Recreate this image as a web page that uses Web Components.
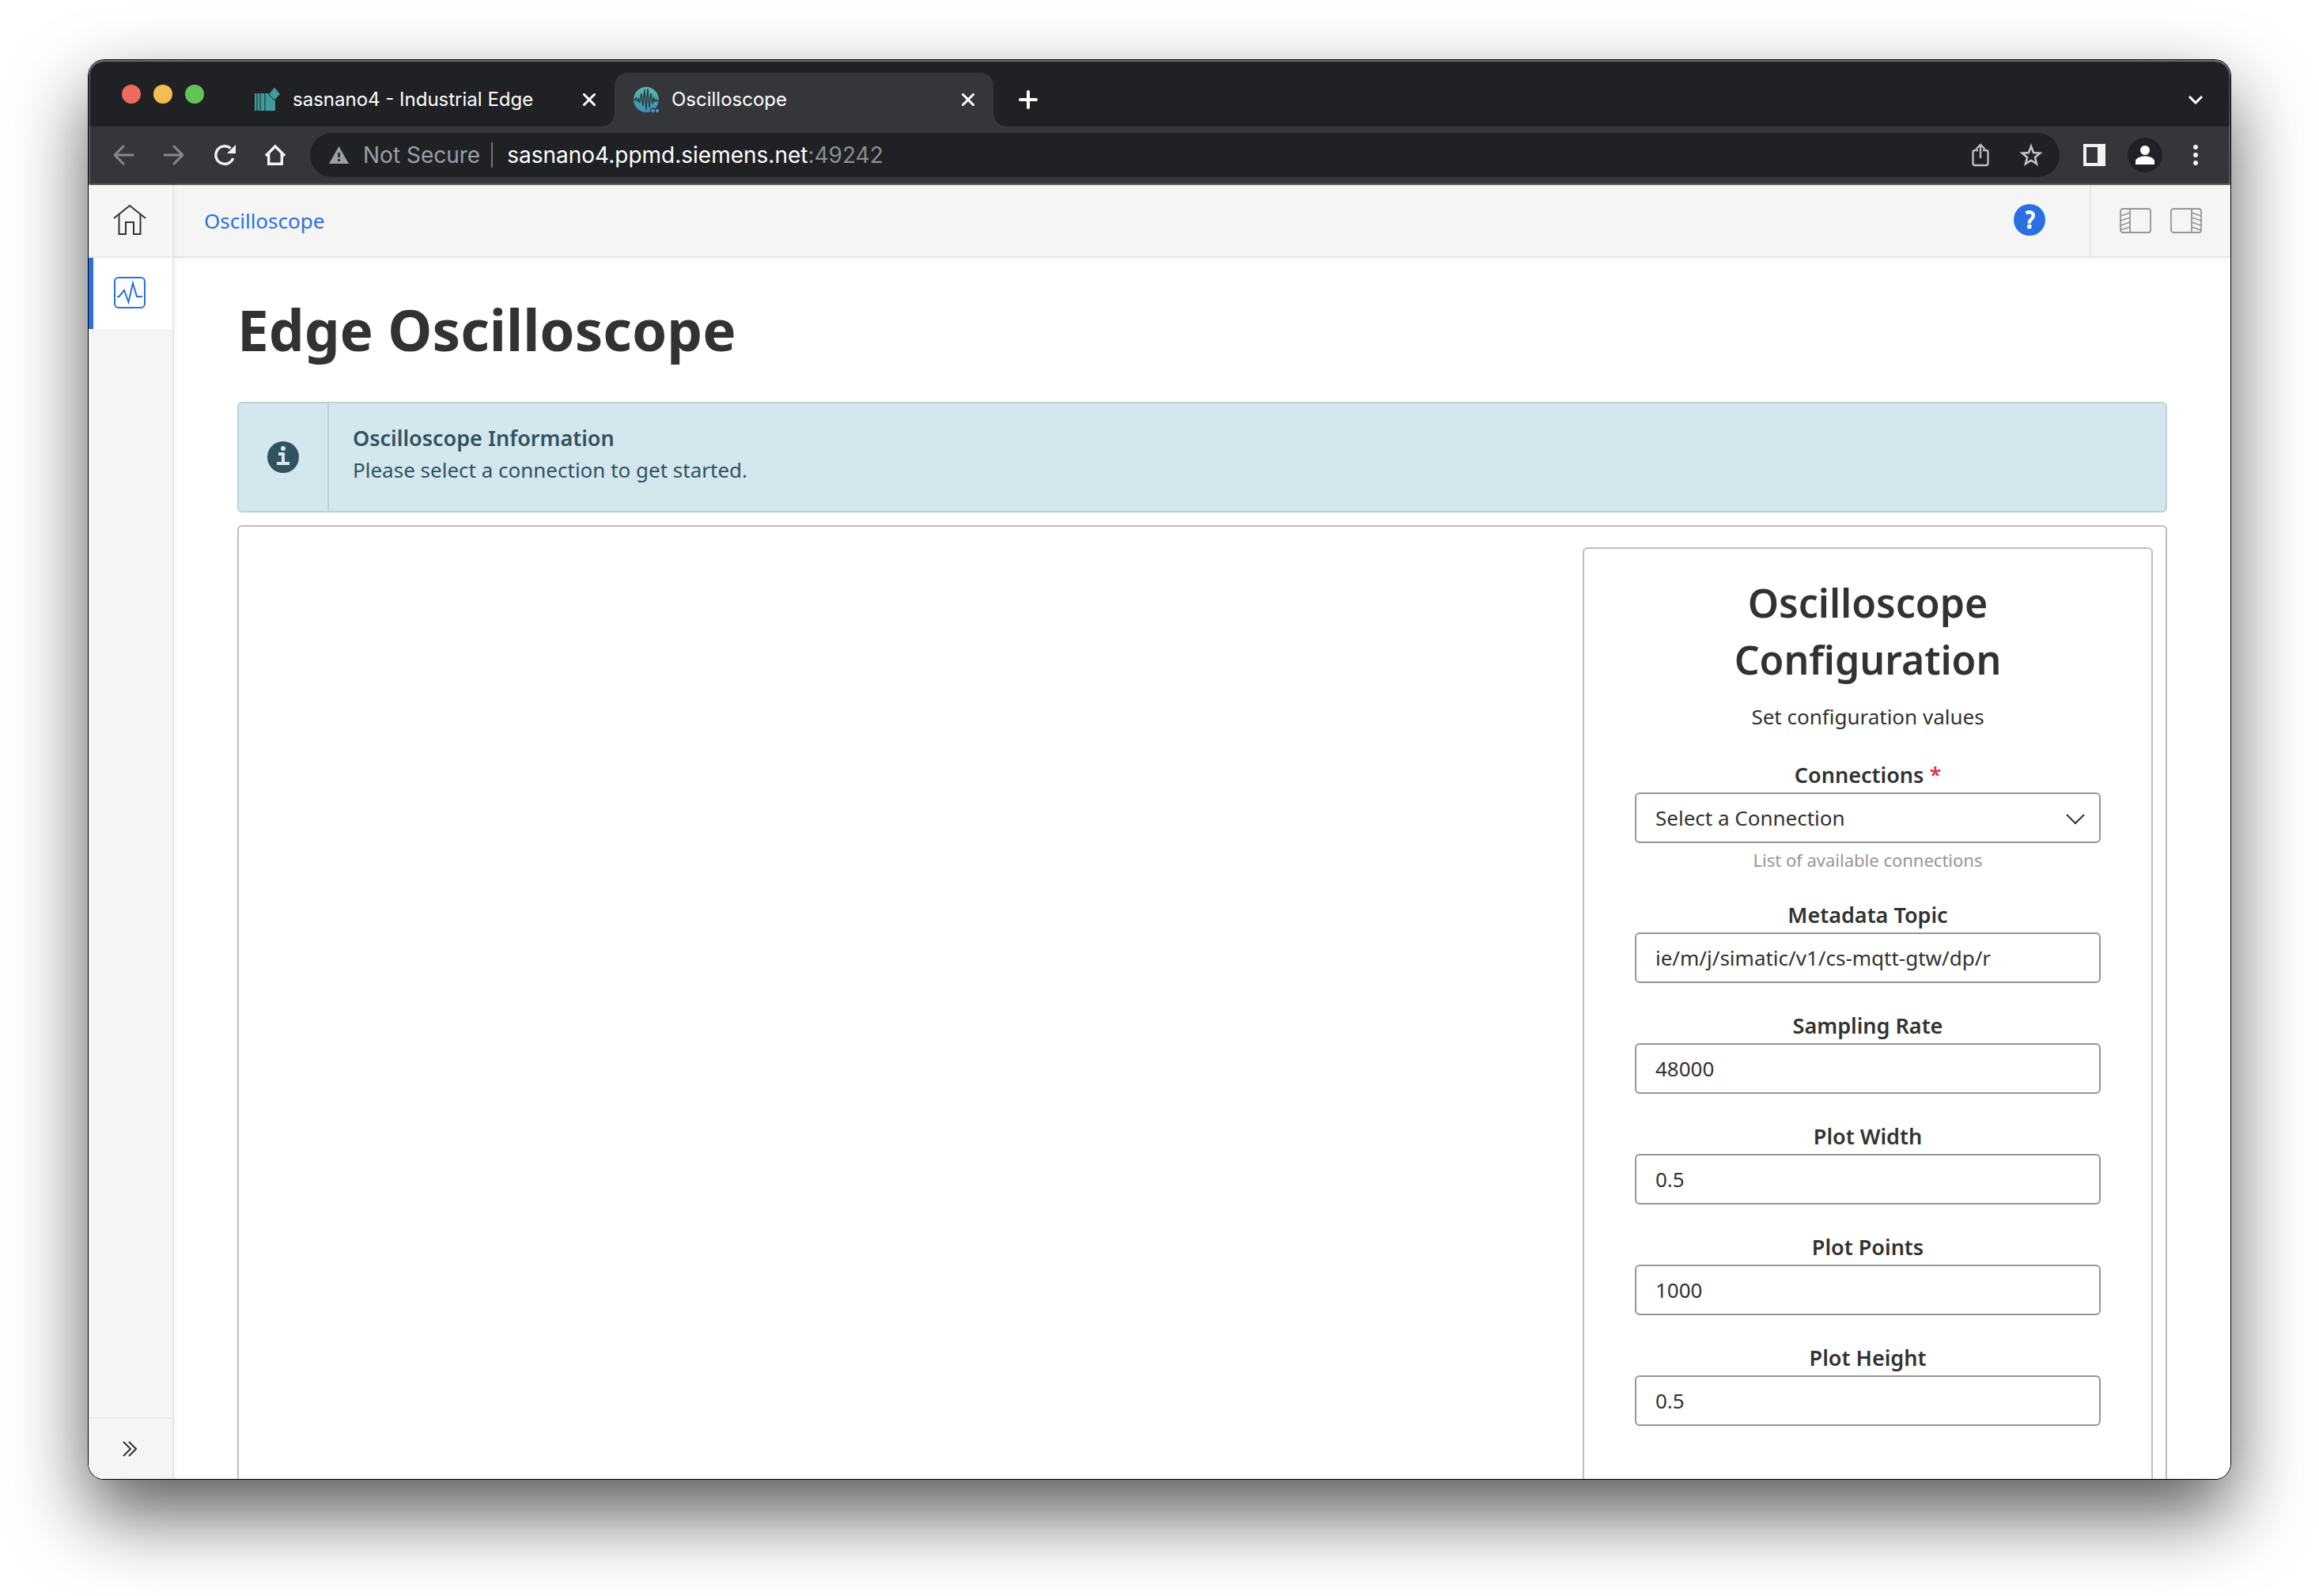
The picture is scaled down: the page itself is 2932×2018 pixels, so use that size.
<!DOCTYPE html>
<html lang="en">
<head>
<meta charset="utf-8">
<title>Oscilloscope</title>
<style>
  html, body { margin: 0; height: 100%; background: #fff; }
  body {
    box-sizing: border-box;
    padding: 76px 112px 148px;
    display: flex;
    flex-direction: column;
    overflow: hidden;
    font-family: "Noto Sans", "Open Sans", sans-serif;
    color: #323232;
  }
</style>
</head>
<body>
<browser-window>
  <tab-strip slot="tabs">
    <browser-tab label="sasnano4 - Industrial Edge">
      <svg slot="favicon" width="32" height="32" viewBox="0 0 32 32" fill="#439a9a"><path d="M0 8h17l9 9v13H0z"/><path d="M2 8h2v22H2zM6 8h2v22H6zM12 8h2v22h-2z" fill="#2b5f62"/><path d="M17.500 9L25 0l7.500 9-7.500 8z" stroke="#202124" stroke-width="1"/></svg>
    </browser-tab>
    <browser-tab label="Oscilloscope" active>
      <svg slot="favicon" width="32" height="32" viewBox="0 0 32 32"><defs><linearGradient id="g" x1="0" y1="0" x2="0" y2="1"><stop offset="0" stop-color="#62bcb8"/><stop offset=".5" stop-color="#459fa2"/><stop offset="1" stop-color="#3c8fc9"/></linearGradient></defs><circle cx="16" cy="16" r="16" fill="url(#g)"/><path d="M0 16h2l1.500-2 1.500 4 1.500-3 1.500 5 2-12 2 16 2-21 2 26 2-27 2 24 2-18 2 13 1.500-7 1.500 4 1.500-2 1.500 2h2" fill="none" stroke="#2b3b40" stroke-width="1.400"/><circle cx="24.500" cy="30" r="3.600" fill="#35363a"/><circle cx="30" cy="30" r="3.600" fill="#35363a"/><circle cx="24.500" cy="30" r="2.300" fill="#3f96cc"/><circle cx="30" cy="30" r="2.300" fill="#3f96cc"/></svg>
    </browser-tab>
  </tab-strip>
  <tool-bar slot="toolbar" host="sasnano4.ppmd.siemens.net" port=":49242"></tool-bar>
  <app-shell>
    <side-nav slot="nav"></side-nav>
    <app-header slot="header"><a href="#oscilloscope">Oscilloscope</a></app-header>
    <scope-page>
      <span slot="title">Edge Oscilloscope</span>
      <info-alert slot="alert">
        <span slot="title">Oscilloscope Information</span>
        Please select a connection to get started.
      </info-alert>
      <config-card>
        <span slot="title">Oscilloscope Configuration</span>
        <span slot="lead">Set configuration values</span>
        <select-field label="Connections" option="Select a Connection" hint="List of available connections"></select-field>
        <text-field label="Metadata Topic" value="ie/m/j/simatic/v1/cs-mqtt-gtw/dp/r"></text-field>
        <text-field label="Sampling Rate" value="48000"></text-field>
        <text-field label="Plot Width" value="0.5"></text-field>
        <text-field label="Plot Points" value="1000"></text-field>
        <text-field label="Plot Height" value="0.5"></text-field>
      </config-card>
    </scope-page>
  </app-shell>
</browser-window>

<script>
const RESET = `
  :host, *, *::before, *::after { box-sizing: border-box; }
  button { margin: 0; padding: 0; border: 0; background: none; color: inherit; font: inherit; display: flex; align-items: center; justify-content: center; }
  svg { display: block; flex: none; }
`;

const define = (name, render) => customElements.define(name, class extends HTMLElement {
  connectedCallback() {
    if (this.shadowRoot) return;
    const tpl = document.createElement('template');
    tpl.innerHTML = render(this);
    this.attachShadow({ mode: 'open' }).append(tpl.content.cloneNode(true));
  }
});

define('browser-window', () => `
  <style>${RESET}
    :host { position: relative; flex: 1; min-height: 0; display: flex; flex-direction: column; overflow: visible;
      border-radius: 20px; background: #fff;
      box-shadow: 0 0 0 1px #000, 0 44px 96px rgba(0,0,0,.65); }
    .clip { flex: 1; min-height: 0; display: flex; flex-direction: column; overflow: hidden; border-radius: 20px; }
    .edge { position: absolute; inset: 0; border-radius: 20px; pointer-events: none;
      box-shadow: inset 0 2px 0 rgba(255,255,255,.2), inset 0 0 0 2px rgba(255,255,255,.18); }
  </style>
  <div class="clip"><slot name="tabs"></slot><slot name="toolbar"></slot><slot></slot></div>
  <div class="edge"></div>
`);

define('tab-strip', () => `
  <style>${RESET}
    :host { display: flex; align-items: flex-end; height: 84px; flex: none; background: #202124; color: #fff;
      font-family: Inter, sans-serif; }
    .lights { display: flex; gap: 16px; height: 82px; align-items: center; padding: 0 40px 0 42px; }
    .lights button { width: 24px; height: 24px; border-radius: 50%; }
    .close { background: #ed6a5e; } .min { background: #f5bd4f; } .max { background: #61c454; }
    .new, .more { height: 68px; width: 64px; }
    .new { margin-left: 12px; }
    .more { margin-left: auto; margin-right: 12px; }
  </style>
  <div class="lights"><button class="close" aria-label="Close window"></button><button class="min" aria-label="Minimise"></button><button class="max" aria-label="Zoom"></button></div>
  <slot></slot>
  <button class="new" aria-label="New tab"><svg width="24" height="24" viewBox="0 0 24 24" fill="none" stroke="#fff" stroke-width="4" stroke-linecap="round"><path d="M12 2v20M2 12h20"/></svg></button>
  <button class="more" aria-label="Search tabs"><svg width="20" height="12" viewBox="0 0 20 12" fill="none" stroke="#fff" stroke-width="3"><path d="M2 2l8 8 8-8"/></svg></button>
`);

define('browser-tab', el => `
  <style>${RESET}
    :host { position: relative; display: flex; align-items: center; gap: 16px; width: 479px; height: 68px;
      padding: 0 24px; font-size: 24px; line-height: 32px; }
    :host([active]) { background: #35363a; border-radius: 16px 16px 0 0; }
    :host([active])::before, :host([active])::after { content: ""; position: absolute; bottom: 0; width: 16px; height: 16px; }
    :host([active])::before { right: 100%; background: radial-gradient(circle at 0 0, #202124 15px, #35363a 16px); }
    :host([active])::after { left: 100%; background: radial-gradient(circle at 100% 0, #202124 15px, #35363a 16px); }
    span { flex: 1; white-space: nowrap; }
  </style>
  <slot name="favicon"></slot>
  <span>${el.getAttribute('label')}</span>
  <button aria-label="Close tab"><svg width="16" height="16" viewBox="0 0 16 16" fill="none" stroke="#fff" stroke-width="3" stroke-linecap="round"><path d="M1.500 1.500l13 13M14.500 1.500l-13 13"/></svg></button>
`);

define('tool-bar', el => `
  <style>${RESET}
    :host { display: flex; align-items: center; gap: 12px; height: 74px; flex: none; padding: 0 12px;
      background: #35363a; border-bottom: 2px solid #5c5d61; font-family: Inter, sans-serif; font-size: 28px; line-height: 36px; }
    .group { display: flex; align-items: center; }
    button { width: 64px; height: 56px; }
    .omni { flex: 1; min-width: 0; height: 56px; border-radius: 28px; background: #202124; display: flex; align-items: center; padding: 0 4px 0 24px; }
    .secure { color: #9aa0a6; padding-left: 18px; white-space: nowrap; }
    .bar { width: 2px; height: 32px; background: #6f7276; margin: 0 18px 0 14px; }
    .url { color: #fff; white-space: nowrap; }
    .url i { font-style: normal; color: #8e8f92; }
    .omni .group { margin-left: auto; }
    .who { width: 44px; height: 44px; border-radius: 50%; background: #202124; display: flex; align-items: center; justify-content: center; }
  </style>
  <div class="group">
    <button aria-label="Back"><svg width="28" height="28" viewBox="0 0 28 28" fill="none" stroke="#87888b" stroke-width="3" stroke-linecap="round" stroke-linejoin="round"><path d="M26 14H3M14 3L3 14l11 11"/></svg></button>
    <button aria-label="Forward"><svg width="28" height="28" viewBox="0 0 28 28" fill="none" stroke="#87888b" stroke-width="3" stroke-linecap="round" stroke-linejoin="round"><path d="M2 14h23M14 3l11 11-11 11"/></svg></button>
    <button aria-label="Reload"><svg width="28" height="28" viewBox="0 0 28 28" fill="none" stroke="#f1f3f4" stroke-width="3.400"><path d="M24.700 18A11.300 11.300 0 1 1 21.500 5.500"/><path d="M28 1v11H17z" fill="#f1f3f4" stroke="none"/></svg></button>
    <button aria-label="Home"><svg width="28" height="28" viewBox="0 0 28 28" fill="none" stroke="#f1f3f4" stroke-width="3.400"><path d="M2 15L14 3l12 12"/><path d="M5.700 12v13.300h16.600V12"/></svg></button>
  </div>
  <div class="omni">
    <svg width="25" height="22" viewBox="0 0 25 22"><path d="M12.500 0L25 22H0z" fill="#9aa0a6"/><path d="M11.200 8h2.600v6h-2.600zM11.200 16h2.600v3h-2.600z" fill="#202124"/></svg>
    <span class="secure">Not Secure</span><span class="bar"></span>
    <span class="url">${el.getAttribute('host')}<i>${el.getAttribute('port')}</i></span>
    <div class="group">
      <button aria-label="Share"><svg width="22" height="30" viewBox="0 0 22 30" fill="none" stroke="#bdbdbf" stroke-width="2.400"><path d="M8 9H4a2.500 2.500 0 0 0-2.500 2.500V25.500A2.500 2.500 0 0 0 4 28h14a2.500 2.500 0 0 0 2.500-2.500V11.500A2.500 2.500 0 0 0 18 9h-4"/><path d="M11 19V2.500M5.500 7.500L11 2l5.500 5.500"/></svg></button>
      <button aria-label="Bookmark"><svg width="30" height="30" viewBox="0 0 30 30" fill="none" stroke="#c0c1c3" stroke-width="2.600"><path d="M15 4l3 8 8.300.600-6.400 5.400 2.100 8.200L15 21.700l-7 4.500 2.100-8.200-6.400-5.400L12 12z"/></svg></button>
    </div>
  </div>
  <div class="group">
    <button aria-label="Side panel"><svg width="28" height="28" viewBox="0 0 28 28"><path d="M0 0h28v28H0zM4 4v20h14V4z" fill="#f1f3f4" fill-rule="evenodd"/></svg></button>
    <button aria-label="Profile"><span class="who"><svg width="24" height="24" viewBox="0 0 24 24" fill="#fff"><circle cx="12" cy="6" r="6"/><path d="M0 24v-4c0-4 6-6.500 12-6.500S24 16 24 20v4z"/></svg></span></button>
    <button aria-label="Menu"><svg width="6" height="26" viewBox="0 0 6 26" fill="#f1f3f4"><circle cx="3" cy="3" r="3"/><circle cx="3" cy="13" r="3"/><circle cx="3" cy="23" r="3"/></svg></button>
  </div>
`);

define('app-shell', () => `
  <style>${RESET}
    :host { flex: 1; min-height: 0; display: flex; background: #fff; }
    main { flex: 1; min-width: 0; display: flex; flex-direction: column; overflow: hidden; }
  </style>
  <slot name="nav"></slot>
  <main><slot name="header"></slot><slot></slot></main>
`);

define('side-nav', () => `
  <style>${RESET}
    :host { position: relative; z-index: 1; display: flex; width: 108px; flex: none; background: #f5f5f5; border-right: 2px solid #e6e6e6;
      box-shadow: 0 0 8px rgba(0,0,0,.06); }
    nav { flex: 1; display: flex; flex-direction: column; }
    a { display: flex; align-items: center; justify-content: center; height: 92px; padding: 0 2px 2px 0; border-bottom: 2px solid #e9e9e9; }
    a.on { height: 90px; background: #fff; border: 0; border-left: 6px solid #2a70e0; padding-right: 8px; }
    button { margin-top: auto; height: 78px; border-top: 2px solid #ebebeb; width: 100%; padding-right: 2px; }
  </style>
  <nav>
    <a href="#home" aria-label="Home"><svg width="42" height="40" viewBox="0 0 42 40" fill="none" stroke="#323232" stroke-width="2"><path d="M1 18L21 2l20 16"/><path d="M7.500 13v25h8.500V23h10v15h8.500V13"/></svg></a>
    <a class="on" href="#oscilloscope" aria-label="Oscilloscope"><svg width="40" height="40" viewBox="0 0 40 40" fill="none" stroke="#2a70e0" stroke-width="2"><rect x="1" y="1" width="38" height="38" rx="5"/><path d="M4 25h2.500L13 17l5.500 15L24 8l5 17h7"/></svg></a>
    <button aria-label="Expand"><svg width="18" height="20" viewBox="0 0 18 20" fill="none" stroke="#323232" stroke-width="2"><path d="M1 1l9 9-9 9M8 1l9 9-9 9"/></svg></button>
  </nav>
`);

define('app-header', () => `
  <style>${RESET}
    :host { display: flex; align-items: center; height: 92px; flex: none; padding-left: 38px; background: #f5f5f5;
      border-bottom: 2px solid #e6e6e6; box-shadow: 0 0 8px rgba(0,0,0,.06); font-size: 26px; line-height: 40px; }
    ::slotted(a) { color: #2a70e0; text-decoration: none; }
    .help { margin-left: auto; margin-right: 56px; padding-bottom: 2px; }
    .panes { align-self: stretch; display: flex; align-items: center; gap: 24px; padding: 0 36px; border-left: 2px solid #e6e6e6; }
  </style>
  <slot></slot>
  <button class="help" aria-label="Help"><svg width="40" height="40" viewBox="0 0 40 40"><circle cx="20" cy="20" r="20" fill="#2a70e0"/><path d="M15.500 11.500c5-2.500 9.300-.8 9.300 3.200 0 4.300-5.300 4.500-5.100 9.800" fill="none" stroke="#fff" stroke-width="4.400"/><circle cx="19.800" cy="28.400" r="2.900" fill="#fff"/></svg></button>
  <div class="panes">
    <button aria-label="Left pane"><svg width="40" height="32" viewBox="0 0 40 32" fill="none" stroke="#969696" stroke-width="1.800"><rect x="1" y="1" width="38" height="30" rx="3"/><path d="M13 1v30M1 10l12-4M1 16l12-4M1 22l12-4M1 28l12-4"/></svg></button>
    <button aria-label="Right pane"><svg width="40" height="32" viewBox="0 0 40 32" fill="none" stroke="#969696" stroke-width="1.800"><rect x="1" y="1" width="38" height="30" rx="3"/><path d="M27 1v30M39 10L27 6M39 16l-12-4M39 22l-12-4M39 28l-12-4"/></svg></button>
  </div>
`);

define('scope-page', () => `
  <style>${RESET}
    :host { flex: 1; min-height: 0; display: flex; flex-direction: column; padding: 48px 80px 0; overflow: hidden; }
    h1 { margin: 0 0 48px; font-size: 71px; line-height: 86px; font-weight: 700; flex: none; }
    .panel { margin-top: 16px; flex: none; display: flex; justify-content: flex-end; padding: 26px 16px; border: 2px solid #bdbdbd; border-radius: 6px; }
  </style>
  <h1><slot name="title"></slot></h1>
  <slot name="alert"></slot>
  <section class="panel"><slot></slot></section>
`);

define('info-alert', () => `
  <style>${RESET}
    :host { display: flex; flex: none; min-height: 140px; border: 2px solid #bdd0d8; border-radius: 6px; background: #d5e7ee; color: #2f535f;
      font-size: 26px; line-height: 40px; }
    .icon { width: 114px; display: flex; align-items: center; justify-content: center; border-right: 2px solid #bdd0d8; }
    .body { padding: 24px 30px; }
    strong { display: block; font-size: 27px; font-weight: 600; }
  </style>
  <div class="icon"><svg width="40" height="40" viewBox="0 0 40 40"><circle cx="20" cy="20" r="20" fill="#2f535f"/><circle cx="20" cy="9" r="3" fill="#d5e7ee"/><path d="M14 14h8v12h6v4H12v-4h6v-8h-4z" fill="#d5e7ee"/></svg></div>
  <div class="body"><strong><slot name="title"></slot></strong><slot></slot></div>
`);

define('config-card', () => `
  <style>${RESET}
    :host { width: 721px; display: block; border: 2px solid #bdbdbd; border-radius: 6px; padding: 32px 64px 120px; text-align: center; }
    h2 { margin: 0 0 16px; font-size: 50px; line-height: 72px; font-weight: 600; }
    p { margin: 0 0 34px; font-size: 26px; line-height: 40px; }
    form { display: flex; flex-direction: column; gap: 34px; }
  </style>
  <h2><slot name="title"></slot></h2>
  <p><slot name="lead"></slot></p>
  <form><slot></slot></form>
`);

const FIELD = `${RESET}
  :host { display: block; font-size: 26px; line-height: 40px; }
  label { display: block; font-size: 27px; font-weight: 600; margin-bottom: 2px; }
  label b { color: #e0334c; font-weight: 600; }
  input, select { display: block; width: 100%; height: 64px; margin: 0; padding: 0 24px; border: 2px solid #969696; border-radius: 6px;
    background: #fff; color: #323232; font: inherit; appearance: none; }
  .box { display: grid; align-items: center; }
  .box > * { grid-area: 1 / 1; }
  .box svg { justify-self: end; margin: 4px 20px 0 0; pointer-events: none; }
  small { display: block; margin-top: 5px; font-size: 22px; line-height: 32px; color: #969696; }
`;

define('text-field', el => `
  <style>${FIELD}</style>
  <label for="f">${el.getAttribute('label')}</label>
  <input id="f" type="text" value="${el.getAttribute('value')}">
`);

define('select-field', el => `
  <style>${FIELD}</style>
  <label for="f">${el.getAttribute('label')} <b>*</b></label>
  <div class="box">
    <select id="f" required aria-describedby="h"><option>${el.getAttribute('option')}</option></select>
    <svg width="24" height="14" viewBox="0 0 24 14" fill="none" stroke="#323232" stroke-width="2"><path d="M1 1l11 11L23 1"/></svg>
  </div>
  <small id="h">${el.getAttribute('hint')}</small>
`);
</script>
</body>
</html>
